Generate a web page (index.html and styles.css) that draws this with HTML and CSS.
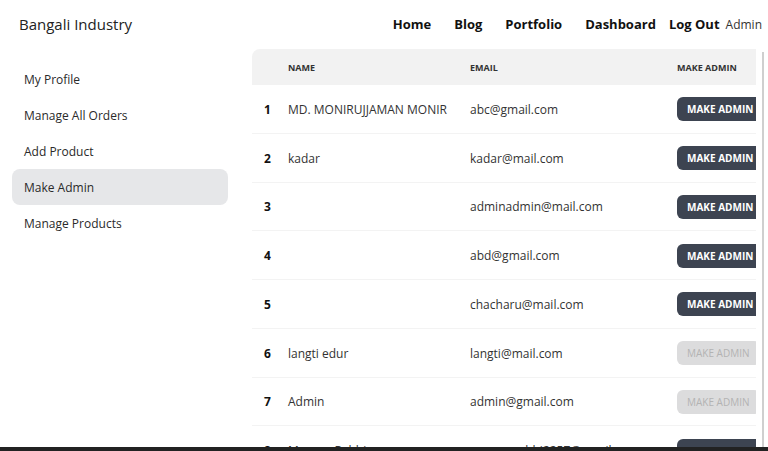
FILE: index.html
```html
<!DOCTYPE html>
<html>
<head>
<meta charset="utf-8">
<link rel="stylesheet" href="styles.css">
</head>
<body>
<header class="topbar">
  <div class="brand">Bangali Industry</div>
  <nav class="nav">
    <a class="nav-link">Home</a>
    <a class="nav-link">Blog</a>
    <a class="nav-link">Portfolio</a>
    <a class="nav-link">Dashboard</a>
    <a class="nav-logout">Log Out</a>
    <span class="nav-user">Admin</span>
  </nav>
</header>
<main class="layout">
  <aside class="sidebar">
    <a class="side-item">My Profile</a>
    <a class="side-item">Manage All Orders</a>
    <a class="side-item">Add Product</a>
    <a class="side-item active">Make Admin</a>
    <a class="side-item">Manage Products</a>
  </aside>
  <section class="table-outer">
    <div class="table-wrap">
      <table class="users">
        <colgroup>
          <col class="c-num"><col class="c-name"><col class="c-email"><col class="c-act">
        </colgroup>
        <thead>
          <tr><th></th><th>Name</th><th>Email</th><th>Make Admin</th></tr>
        </thead>
        <tbody>
          <tr><th>1</th><td>MD. MONIRUJJAMAN MONIR</td><td>abc@gmail.com</td><td><button class="btn">Make Admin</button></td></tr>
          <tr><th>2</th><td>kadar</td><td>kadar@mail.com</td><td><button class="btn">Make Admin</button></td></tr>
          <tr><th>3</th><td></td><td>adminadmin@mail.com</td><td><button class="btn">Make Admin</button></td></tr>
          <tr><th>4</th><td></td><td>abd@gmail.com</td><td><button class="btn">Make Admin</button></td></tr>
          <tr><th>5</th><td></td><td>chacharu@mail.com</td><td><button class="btn">Make Admin</button></td></tr>
          <tr><th>6</th><td>langti edur</td><td>langti@mail.com</td><td><button class="btn disabled">Make Admin</button></td></tr>
          <tr><th>7</th><td>Admin</td><td>admin@gmail.com</td><td><button class="btn disabled">Make Admin</button></td></tr>
          <tr><th>8</th><td>Mamun Rabbi</td><td>mamunrabbi2257@gmail.com</td><td><button class="btn">Make Admin</button></td></tr>
        </tbody>
      </table>
    </div>
  </section>
</main>
<div class="hscroll"></div>
</body>
</html>
```
FILE: styles.css
```css
html, body {
  margin: 0;
  padding: 0;
  height: 451px;
  overflow: hidden;
  background: #fff;
  font-family: "Open Sans", "Noto Sans", sans-serif;
  color: #1f2937;
}

.topbar {
  display: flex;
  align-items: center;
  justify-content: space-between;
  height: 48px;
  padding: 0 6px 0 19px;
}

.brand {
  font-size: 15px;
  color: #222;
}

.nav {
  display: flex;
  align-items: center;
}

.nav-link {
  font-size: 13px;
  font-weight: 700;
  color: #111;
  margin-left: 23px;
}

.nav-logout {
  font-size: 13px;
  font-weight: 700;
  color: #111;
  margin-left: 13px;
}

.nav-user {
  font-size: 12px;
  color: #333;
  margin-left: 6px;
}

.layout {
  display: grid;
  grid-template-columns: 252px 512px;
}

.sidebar {
  display: flex;
  flex-direction: column;
  padding: 13px 24px 0 12px;
}

.side-item {
  display: flex;
  align-items: center;
  height: 36px;
  padding: 1px 0 0 12px;
  box-sizing: border-box;
  font-size: 12px;
  color: #2a2a2a;
  border-radius: 8px;
}

.side-item.active {
  background: #e6e7e9;
}

.table-outer {
  border-right: 2px solid #cfcfcf;
  margin-top: 4px;
}

.table-wrap {
  width: 504px;
  overflow: hidden;
  margin-top: -3px;
}

.users {
  border-collapse: separate;
  border-spacing: 0;
  table-layout: fixed;
  width: 540px;
}

.c-num { width: 24px; }
.c-name { width: 182px; }
.c-email { width: 207px; }
.c-act { width: 127px; }

.users thead th {
  background: #f2f2f2;
  height: 36px;
  padding: 0 0 0 12px;
  text-align: left;
  font-size: 9px;
  font-weight: 700;
  text-transform: uppercase;
  color: #333;
}

.users thead th:first-child {
  border-top-left-radius: 8px;
}

.users tbody th,
.users tbody td {
  height: 48.75px;
  box-sizing: border-box;
  padding: 1px 0 0 12px;
  border-bottom: 1px solid #f3f3f3;
  text-align: left;
  font-size: 12px;
  color: #333;
  white-space: nowrap;
}

.users tbody th {
  font-weight: 700;
  color: #111;
}

.btn {
  display: inline-flex;
  align-items: center;
  height: 24px;
  padding: 0 10px;
  border: none;
  border-radius: 6px;
  background: #3d4451;
  color: #fff;
  font-family: inherit;
  font-size: 10px;
  font-weight: 700;
  text-transform: uppercase;
  white-space: nowrap;
}

.btn.disabled {
  background: #dcdcdd;
  color: #b3b3b3;
  font-weight: 400;
}

.hscroll {
  position: fixed;
  left: 0;
  right: 0;
  bottom: 0;
  height: 4px;
  background: #222;
}
```
